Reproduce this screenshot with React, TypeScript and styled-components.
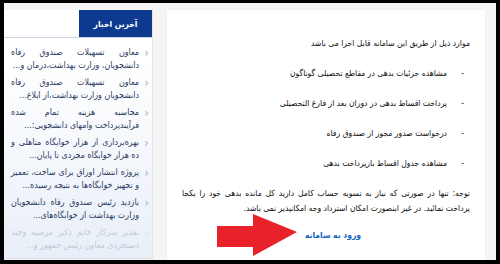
import * as React from "react";
import styled, { createGlobalStyle } from "styled-components";

const GlobalStyle = createGlobalStyle`
  html, body {
    margin: 0;
    padding: 0;
    background: #000;
    width: 500px;
    height: 264px;
    overflow: hidden;
  }
  body {
    font-family: "DejaVu Sans Condensed", "DejaVu Sans", sans-serif;
  }
`;

const news = [
  "معاون تسهیلات صندوق رفاه دانشجویان، وزارت بهداشت،درمان و...",
  "معاون تسهیلات صندوق رفاه دانشجویان وزارت بهداشت،از ابلاغ...",
  "محاسبه هزینه تمام شده فرآیندپرداخت\u00a0وامهای دانشجویی:...",
  "بهره‌برداری از هزار خوابگاه متاهلی و ده هزار خوابگاه مجردی تا پایان...",
  "پروژه انتشار اوراق برای ساخت، تعمیر و تجهیز خوابگاه‌ها به نتیجه رسیده...",
  "بازدید رئیس صندوق رفاه دانشجویان وزارت بهداشت از خوابگاه‌های...",
  "تقدیر سرکار خانم دکتر مرضیه وحید دستجردی معاون رئیس جمهور و...",
];

const items = [
  "مشاهده جزئیات بدهی در مقاطع تحصیلی گوناگون",
  "پرداخت اقساط بدهی در دوران بعد از فارغ التحصیلی",
  "درخواست صدور مجوز از صندوق رفاه",
  "مشاهده جدول اقساط بازپرداخت بدهی",
];

const App = () => {
  return (
    <>
      <GlobalStyle />
      <Frame>
        <Page dir="rtl">
          <Main>
            <Intro>موارد ذیل از طریق این سامانه قابل اجرا می باشد</Intro>
            <List>
              {items.map((t) => (
                <Item key={t}>
                  <Dash>-</Dash>
                  <span>{t}</span>
                </Item>
              ))}
            </List>
            <Note>
              توجه: تنها در صورتی که نیاز به تسویه حساب کامل دارید کل مانده بدهی خود را یکجا
              پرداخت نمائید. در غیر اینصورت امکان استرداد وجه امکانپذیر نمی باشد.
            </Note>
            <LinkRow>
              <EnterLink href="#">ورود به سامانه</EnterLink>
              <Arrow width="82" height="44" viewBox="0 0 82 44">
                <polygon
                  points="0,12 36,12 36,0 80,18 36,42 36,33 0,33"
                  fill="#e8212b"
                />
              </Arrow>
            </LinkRow>
          </Main>
          <Side>
            <SideHead>
              <HeadTab>آخرین اخبار</HeadTab>
            </SideHead>
            <NewsList>
              {news.map((n, i) => (
                <NewsItem key={n} $faded={i === news.length - 1}>
                  <Chevron>‹</Chevron>
                  <NewsText>{n}</NewsText>
                </NewsItem>
              ))}
            </NewsList>
          </Side>
        </Page>
      </Frame>
    </>
  );
};

export default App;

const Frame = styled.div`
  padding: 3px 4px 4px 4px;
  width: 500px;
  height: 264px;
  box-sizing: border-box;
`;

const Page = styled.div`
  height: 257px;
  background: #f5f5f5;
  display: flex;
  flex-direction: row;
  align-items: stretch;
  padding: 7px 11px 0 0;
  box-sizing: border-box;
  gap: 14px;
  overflow: hidden;
`;

const Main = styled.div`
  width: 318px;
  flex: none;
  background: #fff;
  padding: 26px 15px 0 15px;
  box-sizing: border-box;
  font-size: 8.5px;
  color: #111;
  box-shadow: 0 0 2px rgba(0, 0, 0, 0.06);
`;

const Intro = styled.div`
  line-height: 14px;
`;

const List = styled.div`
  display: flex;
  flex-direction: column;
  gap: 16px;
  margin-top: 16px;
`;

const Item = styled.div`
  display: flex;
  line-height: 14px;
`;

const Dash = styled.span`
  width: 23px;
  padding-right: 6px;
  box-sizing: border-box;
`;

const Note = styled.p`
  margin: 16px 0 0 0;
  line-height: 14.5px;
  text-align: justify;
`;

const LinkRow = styled.div`
  position: relative;
  display: flex;
  justify-content: center;
  margin-top: 13px;
`;

const EnterLink = styled.a`
  color: #1565c0;
  font-weight: bold;
  text-decoration: none;
  font-size: 8.5px;
  line-height: 14px;
  margin-left: 14px;
`;

const Arrow = styled.svg`
  position: absolute;
  left: 35px;
  top: -14px;
`;

const Side = styled.div`
  width: 149px;
  flex: none;
  background: linear-gradient(#ffffff 0%, #ffffff 20%, #e9eff8 100%);
  border-right: 1px solid #e4e4e4;
  border-bottom: 1px solid #e0e0e0;
  display: flex;
  flex-direction: column;
  overflow: hidden;
  height: 249px;
  box-sizing: border-box;
`;

const SideHead = styled.div`
  height: 27px;
  flex: none;
  border-bottom: 1px solid #c9d3e3;
  display: flex;
`;

const HeadTab = styled.div`
  width: 73px;
  background: #0d3a8e;
  color: #fff;
  font-size: 8.5px;
  font-weight: bold;
  display: flex;
  align-items: center;
  justify-content: center;
`;

const NewsList = styled.div`
  display: flex;
  flex-direction: column;
  gap: 4px;
  padding: 8px 3px 0 7px;
`;

const NewsItem = styled.div<{ $faded?: boolean }>`
  display: flex;
  opacity: ${(p) => (p.$faded ? 0.22 : 1)};
`;

const Chevron = styled.span`
  color: #aab3c2;
  font-size: 13px;
  line-height: 13px;
  width: 10px;
  flex: none;
`;

const NewsText = styled.div`
  font-size: 8.8px;
  line-height: 13px;
  color: #2a3a62;
  text-align: justify;
`;
